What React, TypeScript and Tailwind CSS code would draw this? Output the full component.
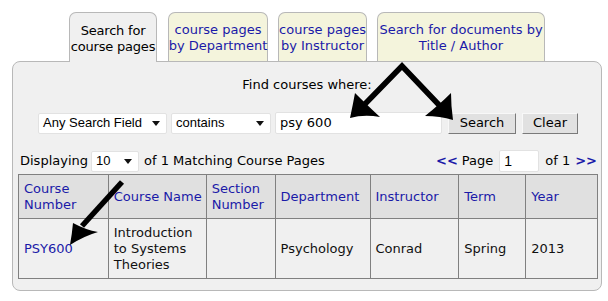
import React from "react";

const tabs = [
  { l1: "course pages", l2: "by Department", w: "w-[100px]" },
  { l1: "course pages", l2: "by Instructor", w: "w-[89px]" },
  { l1: "Search for documents by", l2: "Title / Author", w: "w-[168px]" },
];

const cols = [
  { h: ["Course", "Number"], w: "w-[90px]" },
  { h: ["Course Name"], w: "w-[98px]" },
  { h: ["Section", "Number"], w: "w-[69px]" },
  { h: ["Department"], w: "w-[95px]" },
  { h: ["Instructor"], w: "w-[89px]" },
  { h: ["Term"], w: "w-[67px]" },
  { h: ["Year"], w: "w-[72px]" },
];

const Caret = () => (
  <svg width="8" height="5" viewBox="0 0 8 5" className="shrink-0">
    <path d="M0 0 L8 0 L4 5 Z" fill="#111" />
  </svg>
);

const FakeSelect = ({ label, w }: { label: string; w: string }) => (
  <div
    className={`${w} h-[21px] bg-white border border-[#e2e2e2] rounded-[2px] flex items-center justify-between pl-[4px] pr-[6px] text-[13px] text-black`}
    style={{ fontFamily: '"Liberation Sans", Arial, sans-serif' }}
  >
    <span>{label}</span>
    <Caret />
  </div>
);

const Btn = ({ label, w }: { label: string; w: string }) => (
  <div
    className={`${w} h-[21px] bg-[#e1e1e1] border border-t-[#f8f8f8] border-l-[#f8f8f8] border-r-[#7a7a7a] border-b-[#7a7a7a] flex items-center justify-center text-[13px] text-black`}
  >
    {label}
  </div>
);

const App = () => {
  return (
    <div
      className="relative w-[608px] h-[301px] bg-white overflow-hidden text-[13px] text-[#111]"
      style={{ fontFamily: '"DejaVu Sans", Verdana, sans-serif' }}
    >
      <div className="pt-[12px] pl-[69px] flex gap-[10px] items-end leading-[16px]">
        <div className="w-[88px] h-[50px] -mb-px relative z-10 bg-[#f0f0f0] border border-b-0 border-[#b8b8b8] rounded-t-[7px] flex flex-col items-center justify-center pt-[2px] text-black whitespace-nowrap tracking-[-0.2px]">
          <span>Search for</span>
          <span>course pages</span>
        </div>
        {tabs.map((t, i) => (
          <div
            key={i}
            className={`${t.w} h-[49px] ${i === 0 ? "ml-px" : ""} bg-[#f4f4dc] border border-b-0 border-[#b8b8b8] rounded-t-[7px] flex flex-col items-center justify-center pt-[1px] text-[#1a1aa8] whitespace-nowrap`}
          >
            <span>{t.l1}</span>
            <span>{t.l2}</span>
          </div>
        ))}
      </div>

      <div className="ml-[12px] w-[590px] h-[230px] bg-[#f0f0f0] border border-[#b8b8b8] rounded-[8px] flex flex-col">
        <div className="pt-[15px] text-center text-black leading-[16px]">Find courses where:</div>
        <div className="mt-[19px] ml-[25px] flex items-center">
          <FakeSelect label="Any Search Field" w="w-[129px]" />
          <div className="w-[4px]" />
          <FakeSelect label="contains" w="w-[100px]" />
          <div className="w-[4px]" />
          <div className="w-[167px] h-[22px] bg-white border border-[#e2e2e2] rounded-[2px] flex items-center pl-[4px] text-black">
            psy 600
          </div>
          <div className="w-[6px]" />
          <Btn label="Search" w="w-[68px]" />
          <div className="w-[6px]" />
          <Btn label="Clear" w="w-[56px]" />
        </div>
        <div className="mt-[16px] ml-[7px] mr-[4px] flex items-center text-black">
          <span>Displaying</span>
          <div className="ml-[3px]">
            <FakeSelect label="10" w="w-[48px]" />
          </div>
          <span className="ml-[5px]">of 1 Matching Course Pages</span>
          <div className="ml-auto flex items-center">
            <span className="text-[#1a1aa8] font-bold">&lt;&lt;</span>
            <span className="ml-[4px]">Page</span>
            <div
              className="ml-[6px] w-[40px] h-[22px] bg-white border border-[#e2e2e2] rounded-[2px] flex items-center pl-[4px] text-[14px]"
              style={{ fontFamily: '"Liberation Sans", Arial, sans-serif' }}
            >
              1
            </div>
            <span className="ml-[6px]">of 1</span>
            <span className="ml-[5px] text-[#1a1aa8] font-bold">&gt;&gt;</span>
          </div>
        </div>
        <table className="mt-[2px] ml-[5px] w-[580px] border-collapse leading-[16px]">
          <thead>
            <tr className="h-[44px] bg-[#e0e0e0]">
              {cols.map((c, i) => (
                <th
                  key={i}
                  className={`${c.w} border border-[#808080] text-left font-normal text-[#1a1aa8] pl-[5px] align-middle`}
                >
                  {c.h.map((x, j) => (
                    <div key={j}>{x}</div>
                  ))}
                </th>
              ))}
            </tr>
          </thead>
          <tbody>
            <tr className="h-[60px] bg-[#f0f0f0]">
              <td className="border border-[#808080] pl-[5px] text-[#1a1aa8]">PSY600</td>
              <td className="border border-[#808080] pl-[5px]">
                <div>Introduction</div>
                <div>to Systems</div>
                <div>Theories</div>
              </td>
              <td className="border border-[#808080]"></td>
              <td className="border border-[#808080] pl-[5px]">Psychology</td>
              <td className="border border-[#808080] pl-[5px]">Conrad</td>
              <td className="border border-[#808080] pl-[5px]">Spring</td>
              <td className="border border-[#808080] pl-[5px]">2013</td>
            </tr>
          </tbody>
        </table>
      </div>

      <svg className="absolute inset-0 pointer-events-none" width="608" height="301" viewBox="0 0 608 301">
        <g stroke="#000" strokeWidth="5.5" fill="none" strokeLinejoin="miter">
          <path d="M365 104 L402 66 L440 106" />
          <path d="M122 182 L82 226" />
        </g>
        <g fill="#000">
          <path d="M350 118 Q353 104 355 93 Q366 104 380 117 Q364 114 350 118 Z" />
          <path d="M453 120 Q440 116 425 116 Q440 104 451 93 Q451 106 453 120 Z" />
          <path d="M70 245 Q72 234 73 223 Q86 230 98 232 Q84 236 70 245 Z" />
        </g>
      </svg>
    </div>
  );
};

export default App;
